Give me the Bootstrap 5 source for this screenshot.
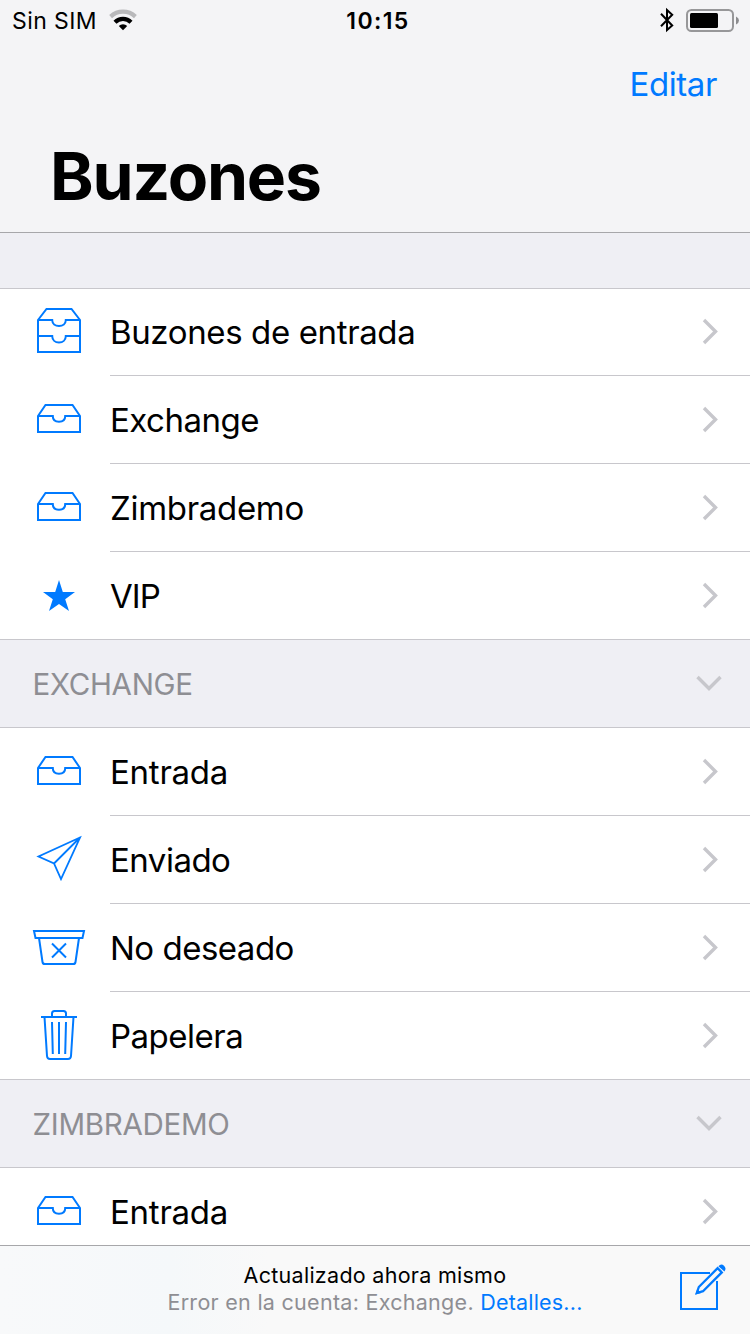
<!DOCTYPE html>
<html lang="es">
<head>
<meta charset="utf-8">
<meta name="viewport" content="width=device-width, initial-scale=1">
<title>Buzones</title>
<link href="https://cdn.jsdelivr.net/npm/bootstrap@5.3.0/dist/css/bootstrap.min.css" rel="stylesheet">
<style>
  :root { --ios-blue: #007aff; --hairline: #c8c7cc; --group: #efeff4; }
  body { font-family: Inter, "Liberation Sans", sans-serif; color: #000; background: #fff; }
  svg { display: block; flex: none; }
  .screen { height: 1334px; }
  .top-area { height: 233px; background: #f4f4f6; border-bottom: 1px solid #a7a7aa; }
  .status { height: 42px; font-size: 23px; line-height: 42px; padding: 0 11px 0 12px; }
  .status > div { flex: 1 1 0; }
  .carrier { letter-spacing: .42px; }
  .clock { font-weight: 600; letter-spacing: 1.4px; padding-left: 5px; }
  .actions { height: 86px; padding-right: 33px; }
  .actions a { font-size: 33px; letter-spacing: -.4px; color: var(--ios-blue); }
  .page-title { height: 104px; line-height: 97px; font-size: 66px; font-weight: 700; letter-spacing: -1.19px; padding-left: 50px; }
  .spacer { height: 55px; background: var(--group); }
  .mailboxes { --bs-list-group-border-radius: 0; }
  .mailbox { height: 88px; padding-left: 30px; color: #000; font-size: 33px; line-height: 88px; letter-spacing: -.5px; }
  .mailbox svg.glyph { width: 60px; height: 64px; margin: 12px 20px 12px 0; fill: none; stroke: var(--ios-blue); stroke-width: 2; }
  .mailbox .cell { height: 88px; border-bottom: 1px solid var(--hairline); }
  .mailbox:last-child { box-shadow: inset 0 -1px var(--hairline); }
  .mailbox:last-child .cell { border-bottom: 0; }
  .first-group { box-shadow: inset 0 1px var(--hairline); }
  .chev { fill: none; stroke: #c7c7cc; stroke-width: 3.4; }
  .cell .chev { margin: 28.500px 30.500px 0 auto; }
  .group-head { height: 88px; line-height: 88px; font-size: 29.5px; letter-spacing: -.3px; color: #8e8e93; background: var(--group); border-bottom: 1px solid var(--hairline); padding: 0 27px 0 32.500px; }
  .group-head .chev { margin-top: 33px; }
  .wide { letter-spacing: -.37px; }
  .mid { letter-spacing: -.3px; }
  .open { letter-spacing: -.25px; }
  .tight { letter-spacing: -.9px; }
  .bottom-bar { height: 89px; border-top: 1px solid #a7a7aa; background: linear-gradient(90deg, #f8f9fa 0, #f5f8fa 170px, #f9f9f9 270px); font-size: 21.5px; line-height: 27px; letter-spacing: .28px; padding-top: 16px; }
  .muted { color: #8e8e93; }
  .bottom-bar a { color: var(--ios-blue); letter-spacing: .2px; }
  .compose { top: 15px; right: 22px; }
</style>
</head>
<body>
<svg width="0" height="0" class="position-absolute" aria-hidden="true">
  <symbol id="tray" viewBox="0 0 60 64"><path d="M8 28L15.5 17H42.5L50 28V44H8ZM8 28H22.800C22.800 31.700 25.300 33.800 29 33.800S35.200 31.700 35.200 28H50"/></symbol>
  <symbol id="go" viewBox="0 0 20 30"><path d="M4 3L15.500 14.500L4 26"/></symbol>
</svg>

<div class="screen d-flex flex-column overflow-hidden">
  <header class="top-area flex-shrink-0">
    <div class="status d-flex">
      <div class="d-flex carrier">Sin SIM
        <svg class="ms-2" width="32" height="41" fill="none">
          <path d="M5.600 16.600A18.200 18.200 0 0 1 30.400 16.600" stroke="#b9b9bb" stroke-width="4.200"/>
          <path d="M10 22.300A11.200 11.200 0 0 1 26 22.300" stroke="#000" stroke-width="4.200"/>
          <path d="M18 30.200L13.800 26A6 6 0 0 1 22.200 26Z" fill="#000"/>
        </svg>
      </div>
      <div class="clock text-center">10:15</div>
      <div class="d-flex justify-content-end">
        <svg width="18" height="41" fill="none" stroke="#000" stroke-width="2"><path d="M3 13.800L14.200 25.500L9 30V10L14.200 14.800L3 26.300"/></svg>
        <svg class="ms-2" width="55" height="41">
          <rect x="3" y="10" width="46" height="21" rx="4.500" fill="none" stroke="#979799" stroke-width="2"/>
          <rect x="6" y="13" width="28" height="15" rx="1.500"/>
          <path d="M52 16.500Q55 18 55 20.500T52 24.500Z" fill="#8c8c8e"/>
        </svg>
      </div>
    </div>
    <div class="actions d-flex align-items-center justify-content-end"><a href="#" class="text-decoration-none">Editar</a></div>
    <h1 class="page-title m-0">Buzones</h1>
  </header>

  <main class="flex-grow-1 overflow-hidden">
    <div class="spacer"></div>
    <div class="mailboxes first-group list-group list-group-flush">
      <a href="#" class="mailbox d-flex text-decoration-none"><svg class="glyph"><path d="M8 20L16.500 9H41.500L50 20V52H8ZM8 20H22.200C22.200 23.800 25.300 26 29 26S35.800 23.800 35.800 20H50M8 36H22.200C22.200 40.300 25.300 42.500 29 42.500S35.800 40.300 35.800 36H50"/></svg><span class="cell d-flex flex-grow-1"><span class="wide">Buzones de entrada</span><svg class="chev" width="20" height="30"><use href="#go"/></svg></span></a>
      <a href="#" class="mailbox d-flex text-decoration-none"><svg class="glyph"><use href="#tray"/></svg><span class="cell d-flex flex-grow-1">Exchange<svg class="chev" width="20" height="30"><use href="#go"/></svg></span></a>
      <a href="#" class="mailbox d-flex text-decoration-none"><svg class="glyph"><use href="#tray"/></svg><span class="cell d-flex flex-grow-1"><span class="mid">Zimbrademo</span><svg class="chev" width="20" height="30"><use href="#go"/></svg></span></a>
      <a href="#" class="mailbox d-flex text-decoration-none"><svg class="glyph"><path d="M29 16L32.800 28H45L35.200 35.300L39 47L29 39.900L19 47L22.800 35.300L13 28H25.200Z" fill="#007aff" stroke="none"/></svg><span class="cell d-flex flex-grow-1"><span class="tight">VIP</span><svg class="chev" width="20" height="30"><use href="#go"/></svg></span></a>
    </div>

    <div class="group-head d-flex justify-content-between">EXCHANGE<svg class="chev" width="30" height="20"><path d="M4.500 4L16 15.500L27.500 4"/></svg></div>
    <div class="mailboxes list-group list-group-flush">
      <a href="#" class="mailbox d-flex text-decoration-none"><svg class="glyph"><use href="#tray"/></svg><span class="cell d-flex flex-grow-1"><span class="open">Entrada</span><svg class="chev" width="20" height="30"><use href="#go"/></svg></span></a>
      <a href="#" class="mailbox d-flex text-decoration-none"><svg class="glyph"><path d="M50 9.500L8.500 28.500L24 35.500L31 51ZL24 35.500" stroke-width="1.800"/></svg><span class="cell d-flex flex-grow-1">Enviado<svg class="chev" width="20" height="30"><use href="#go"/></svg></span></a>
      <a href="#" class="mailbox d-flex text-decoration-none"><svg class="glyph"><path d="M4 15H54L52.500 22H5.500ZM9 22L12.500 46Q12.800 48 14.800 48H43.200Q45.200 48 45.500 46L49 22M22 27.500L36 41.500M36 27.500L22 41.500"/></svg><span class="cell d-flex flex-grow-1">No deseado<svg class="chev" width="20" height="30"><use href="#go"/></svg></span></a>
      <a href="#" class="mailbox d-flex text-decoration-none"><svg class="glyph"><path d="M11 13H47M22 13V9.500Q22 7 24.500 7H33.500Q36 7 36 9.500V13M14.500 13L17 52Q17.300 55 20 55H38Q40.700 55 41 52L43.500 13M22 18L22.800 50M29 18V50M36 18L35.200 50"/></svg><span class="cell d-flex flex-grow-1">Papelera<svg class="chev" width="20" height="30"><use href="#go"/></svg></span></a>
    </div>

    <div class="group-head d-flex justify-content-between">ZIMBRADEMO<svg class="chev" width="30" height="20"><path d="M4.500 4L16 15.500L27.500 4"/></svg></div>
    <div class="mailboxes list-group list-group-flush">
      <a href="#" class="mailbox d-flex text-decoration-none"><svg class="glyph"><use href="#tray"/></svg><span class="cell d-flex flex-grow-1"><span class="open">Entrada</span><svg class="chev" width="20" height="30"><use href="#go"/></svg></span></a>
    </div>
  </main>

  <footer class="bottom-bar position-relative text-center flex-shrink-0">
    <div>Actualizado ahora mismo</div>
    <div><span class="muted">Error en la cuenta: Exchange.</span> <a href="#" class="text-decoration-none">Detalles...</a></div>
    <svg class="compose position-absolute" width="52" height="52" fill="none" stroke="#007aff" stroke-width="2">
      <path d="M34 12H5V48H41V20"/>
      <path d="M20.800 32L22.800 26L41.600 7.200L45.800 11.400L27 30.200Z" stroke-width="2.300"/>
      <path d="M19.400 33.500L21.200 28L25.200 32Z" fill="#007aff" stroke="none"/>
      <path d="M42.400 5.200Q45.200 2 48 4.800T48.400 10.600Z" fill="#007aff" stroke="none"/>
    </svg>
  </footer>
</div>
<script src="https://cdn.jsdelivr.net/npm/bootstrap@5.3.0/dist/js/bootstrap.bundle.min.js"></script>
</body>
</html>
